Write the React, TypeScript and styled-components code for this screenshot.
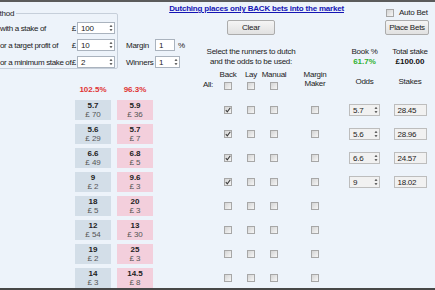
import styled, { createGlobalStyle } from 'styled-components';

const GlobalStyle = createGlobalStyle`
  html, body {
    margin: 0;
    padding: 0;
    background: #edf3fa;
  }
`;

// shared column template for the header labels and the runner rows
const COLS = '75px 36px 6px 36px 63px 24px 22px 24px 58px 41px 50px';

const Frame = styled.div`
  width: 435px;
  height: 290px;
  box-sizing: border-box;
  border-top: 2px solid #5b5b5b;
  border-bottom: 2px solid #474747;
  overflow: hidden;
  background: #edf3fa;
  color: #222;
  font-family: "Liberation Sans", Arial, sans-serif;
  font-size: 8px;
  line-height: 9px;
  letter-spacing: -0.25px;
`;

const Header = styled.div`
  display: grid;
  grid-template-columns: ${COLS};
  grid-template-rows: 16px 22px 28px 26px;
`;

const MethodPanel = styled.div`
  grid-column: 1 / 5;
  grid-row: 1 / 4;
  display: flex;
  align-items: flex-start;
  min-width: 0;
`;

const GroupBox = styled.fieldset`
  flex-shrink: 0;
  box-sizing: border-box;
  width: 140px;
  min-width: 0;
  margin: 7px 0 0 -22px;
  padding: 0 2px 0 8px;
  border: 1px solid #c6cfda;
  border-radius: 2px;
`;

const Legend = styled.legend`
  padding: 0 2px;
  font-size: 8px;
  line-height: 9px;
`;

const MethodRows = styled.div`
  display: flex;
  flex-direction: column;
  gap: 5px;
  padding: 4px 0 0 13px;
`;

const MethodRow = styled.div`
  display: flex;
  align-items: center;
  height: 12px;
  white-space: nowrap;
`;

const RowLabel = styled.span`
  flex: 1;
  letter-spacing: -0.35px;
`;

const Pound = styled.span`
  padding-right: 1px;
`;

const SideFields = styled.div`
  flex-shrink: 0;
  display: grid;
  grid-template-columns: 29px auto;
  grid-auto-rows: 12px;
  row-gap: 5px;
  align-items: center;
  margin: 37px 0 0 8px;
  white-space: nowrap;
`;

const Inline = styled.div`
  display: flex;
  align-items: center;
  gap: 3px;
`;

const SpinFrame = styled.div<{ $w: number; $muted?: boolean }>`
  flex-shrink: 0;
  width: ${p => p.$w}px;
  height: 12px;
  box-sizing: border-box;
  display: flex;
  align-items: center;
  justify-content: space-between;
  padding: 0 1px 0 3px;
  border: 1px solid ${p => (p.$muted ? '#bdbdbd' : '#aab3be')};
  background: ${p => (p.$muted ? '#f1f1f1' : '#ffffff')};
  color: #222;
`;

const Title = styled.a`
  grid-column: 5 / 10;
  grid-row: 1;
  justify-self: end;
  align-self: start;
  margin-top: 2px;
  white-space: nowrap;
  font-weight: bold;
  letter-spacing: -0.2px;
  color: #1414b4;
  text-decoration: underline;
  cursor: pointer;
`;

const AutoBet = styled.label`
  grid-column: 11;
  grid-row: 1;
  align-self: end;
  display: flex;
  align-items: center;
  gap: 5px;
  margin: 0 0 1px 1px;
  white-space: nowrap;
`;

const Button = styled.button<{ $w: number }>`
  width: ${p => p.$w}px;
  height: 15px;
  margin-top: 2px;
  padding: 0;
  align-self: start;
  border: 1px solid #acacac;
  border-radius: 2px;
  background: linear-gradient(#f5f5f5, #e1e1e1);
  font-family: inherit;
  font-size: 8px;
  letter-spacing: -0.25px;
  color: #222;
`;

const ClearButton = styled(Button)`
  grid-column: 6 / 9;
  grid-row: 2;
  justify-self: center;
`;

const PlaceButton = styled(Button)`
  grid-column: 11;
  grid-row: 2;
  justify-self: start;
`;

const Stat = styled.div<{ $col: string }>`
  grid-column: ${p => p.$col};
  grid-row: 3;
  align-self: end;
  justify-self: center;
  margin-bottom: 1px;
  text-align: center;
  white-space: nowrap;
  line-height: 10px;
`;

const StatValue = styled.div<{ $color: string }>`
  font-weight: bold;
  color: ${p => p.$color};
  letter-spacing: 0;
`;

const AllLabel = styled.span`
  grid-column: 5;
  grid-row: 4;
  justify-self: end;
  margin: 12px 3px 0 0;
`;

const HeadCheck = styled.div<{ $col: number }>`
  grid-column: ${p => p.$col};
  grid-row: 4;
  justify-self: center;
  display: flex;
  flex-direction: column;
  align-items: center;
  gap: 3px;
  margin-top: 2px;
  white-space: nowrap;
`;

const ColLabel = styled.div<{ $col: number; $top: number }>`
  grid-column: ${p => p.$col};
  grid-row: 4;
  justify-self: center;
  margin-top: ${p => p.$top}px;
  text-align: center;
  line-height: 8.5px;
`;

const BookPct = styled.div<{ $col: number }>`
  grid-column: ${p => p.$col};
  grid-row: 4;
  justify-self: center;
  align-self: end;
  color: #e03232;
  font-weight: bold;
  letter-spacing: 0;
`;

const Table = styled.div`
  display: grid;
  grid-template-columns: ${COLS};
  grid-auto-rows: 20px;
  row-gap: 4px;
  margin-top: 6px;
`;

const Price = styled.div<{ $col: number; $lay?: boolean }>`
  grid-column: ${p => p.$col};
  display: flex;
  flex-direction: column;
  align-items: center;
  justify-content: center;
  background: ${p => (p.$lay ? '#f3cfdc' : '#d3dee8')};
  color: #555;
  letter-spacing: 0;
`;

const Odds = styled.span`
  font-weight: bold;
  color: #222;
`;

const Cell = styled.div<{ $col: number }>`
  grid-column: ${p => p.$col};
  display: flex;
  align-items: center;
  justify-content: center;
`;

const Box = styled.span`
  display: inline-flex;
  align-items: center;
  justify-content: center;
  width: 8px;
  height: 8px;
  box-sizing: border-box;
  border: 1px solid #a7a7a7;
  background: linear-gradient(135deg, #d4d4d4, #f6f6f6);
`;

function Check({ checked = false }: { checked?: boolean }) {
  return (
    <Box>
      {checked && (
        <svg width="6" height="6" viewBox="0 0 6 6">
          <path d="M0.8 3.1 L2.3 4.8 L5.3 0.7" stroke="#3c3c3c" strokeWidth="1.1" fill="none" />
        </svg>
      )}
    </Box>
  );
}

function Spin({ value, w, muted, arrows = true }: { value: string; w: number; muted?: boolean; arrows?: boolean }) {
  return (
    <SpinFrame $w={w} $muted={muted}>
      <span>{value}</span>
      {arrows && (
        <svg width="4" height="8" viewBox="0 0 4 8">
          <polygon points="2,1 3.5,2.8 0.5,2.8" fill="#333" />
          <polygon points="0.5,5.2 3.5,5.2 2,7" fill="#333" />
        </svg>
      )}
    </SpinFrame>
  );
}

const runners = [
  { back: ['5.7', '£ 70'], lay: ['5.9', '£ 36'], odds: '5.7', stake: '28.45' },
  { back: ['5.6', '£ 29'], lay: ['5.7', '£ 7'], odds: '5.6', stake: '28.96' },
  { back: ['6.6', '£ 49'], lay: ['6.8', '£ 5'], odds: '6.6', stake: '24.57' },
  { back: ['9', '£ 2'], lay: ['9.6', '£ 3'], odds: '9', stake: '18.02' },
  { back: ['18', '£ 5'], lay: ['20', '£ 3'] },
  { back: ['12', '£ 54'], lay: ['13', '£ 30'] },
  { back: ['19', '£ 2'], lay: ['25', '£ 3'] },
  { back: ['14', '£ 3'], lay: ['14.5', '£ 8'] },
];

export default function App() {
  return (
    <>
      <GlobalStyle />
      <Frame>
        <Header>
          <MethodPanel>
            <GroupBox>
              <Legend>Method</Legend>
              <MethodRows>
                <MethodRow>
                  <RowLabel>with a stake of</RowLabel>
                  <Pound>£</Pound>
                  <Spin value="100" w={38} />
                </MethodRow>
                <MethodRow>
                  <RowLabel>or a target profit of</RowLabel>
                  <Pound>£</Pound>
                  <Spin value="10" w={38} />
                </MethodRow>
                <MethodRow>
                  <RowLabel>or a minimum stake of</RowLabel>
                  <Pound>£</Pound>
                  <Spin value="2" w={38} />
                </MethodRow>
              </MethodRows>
            </GroupBox>
            <SideFields>
              <span>Margin</span>
              <Inline>
                <Spin value="1" w={20} arrows={false} />
                <span>%</span>
              </Inline>
              <span>Winners</span>
              <Spin value="1" w={25} />
            </SideFields>
          </MethodPanel>

          <Title>Dutching places only BACK bets into the market</Title>
          <AutoBet>
            <Check />
            Auto Bet
          </AutoBet>

          <ClearButton $w={48}>Clear</ClearButton>
          <PlaceButton $w={44}>Place Bets</PlaceButton>

          <Stat $col="6 / 9">
            Select the runners to dutch
            <br />
            and the odds to be used:
          </Stat>
          <Stat $col="10">
            Book %
            <StatValue $color="#2fb12f">61.7%</StatValue>
          </Stat>
          <Stat $col="11">
            Total stake
            <StatValue $color="#111">£100.00</StatValue>
          </Stat>

          <BookPct $col={2}>102.5%</BookPct>
          <BookPct $col={4}>96.3%</BookPct>
          <AllLabel>All:</AllLabel>
          <HeadCheck $col={6}>
            Back
            <Check />
          </HeadCheck>
          <HeadCheck $col={7}>
            Lay
            <Check />
          </HeadCheck>
          <HeadCheck $col={8}>
            Manual
            <Check />
          </HeadCheck>
          <ColLabel $col={9} $top={3}>
            Margin
            <br />
            Maker
          </ColLabel>
          <ColLabel $col={10} $top={10}>Odds</ColLabel>
          <ColLabel $col={11} $top={10}>Stakes</ColLabel>
        </Header>

        <Table>
          {runners.map((r, i) => (
            <>
              <Price key={`b${i}`} $col={2}>
                <Odds>{r.back[0]}</Odds>
                <span>{r.back[1]}</span>
              </Price>
              <Price key={`l${i}`} $col={4} $lay>
                <Odds>{r.lay[0]}</Odds>
                <span>{r.lay[1]}</span>
              </Price>
              <Cell key={`c1${i}`} $col={6}>
                <Check checked={!!r.odds} />
              </Cell>
              <Cell key={`c2${i}`} $col={7}>
                <Check />
              </Cell>
              <Cell key={`c3${i}`} $col={8}>
                <Check />
              </Cell>
              <Cell key={`c4${i}`} $col={9}>
                <Check />
              </Cell>
              {r.odds && (
                <Cell key={`o${i}`} $col={10}>
                  <Spin value={r.odds} w={31} muted />
                </Cell>
              )}
              {r.stake && (
                <Cell key={`s${i}`} $col={11}>
                  <Spin value={r.stake} w={33} muted arrows={false} />
                </Cell>
              )}
            </>
          ))}
        </Table>
      </Frame>
    </>
  );
}
